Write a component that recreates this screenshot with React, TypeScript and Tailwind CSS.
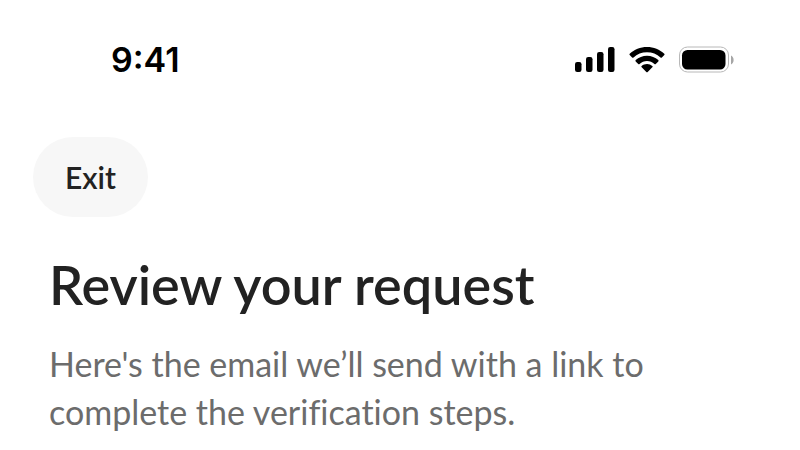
function StatusIcons() {
  return (
    <div className="flex items-center" aria-hidden="true">
      <svg className="h-7 w-10" viewBox="0 0 40 28" fill="#000">
        <rect x="0" y="16" width="6.500" height="10" rx="2.200" />
        <rect x="11" y="11" width="6.500" height="15" rx="2.200" />
        <rect x="22" y="6" width="6.500" height="20" rx="2.200" />
        <rect x="33" y="1" width="6.500" height="25" rx="2.200" />
      </svg>
      <svg className="ml-3.5 h-7 w-9" viewBox="0 0 36 28" fill="#000">
        <path d="M18 1C11.300 1 5.200 3.500.7 7.700c-.4.4-.4 1 0 1.400l2.400 2.400c.4.4 1 .4 1.400 0C8.100 8.200 12.800 6.300 18 6.300s9.900 1.900 13.500 5.200c.4.4 1 .4 1.400 0l2.400-2.400c.4-.4.4-1 0-1.400C30.800 3.500 24.700 1 18 1Z" />
        <path d="M18 9.700c-4.300 0-8.300 1.600-11.300 4.300-.4.4-.4 1 0 1.400l2.500 2.500c.4.400 1 .4 1.400.1 2-1.800 4.600-2.900 7.400-2.900s5.400 1.100 7.400 2.900c.4.300 1 .3 1.400-.1l2.500-2.500c.4-.4.4-1 0-1.400-3-2.700-7-4.300-11.300-4.300Z" />
        <path d="M18 18c-2 0-3.900.7-5.300 1.900-.5.400-.5 1 0 1.400l4.600 4.600c.4.4 1 .4 1.400 0l4.600-4.600c.5-.4.5-1 0-1.400A8 8 0 0 0 18 18Z" />
      </svg>
      <svg className="ml-3.5 h-7 w-14" viewBox="0 0 56 28">
        <rect x="0.500" y="1" width="49" height="25" rx="8" fill="none" stroke="#b8b8b8" />
        <rect x="3" y="4" width="43.500" height="19.500" rx="5.500" fill="#000" />
        <path d="M52 9.500v9c1.600-.7 2.600-2.400 2.600-4.500S53.600 10.200 52 9.500Z" fill="#a6a6a6" />
      </svg>
    </div>
  );
}

export default function App() {
  return (
    <div className="min-h-screen bg-white px-[33px] font-['Lato',sans-serif] text-[#222222]">
      <header className="flex items-center justify-between pt-9 pr-8 pl-[78px]">
        <time className="font-['Inter',sans-serif] text-[34px] leading-12 font-semibold text-black">
          9:41
        </time>
        <StatusIcons />
      </header>

      <main className="pt-[53px]">
        <button
          type="button"
          className="h-20 rounded-full bg-[#f7f7f7] px-8 text-[30px] leading-9 font-semibold"
        >
          Exit
        </button>

        <div className="px-4 pt-9">
          <h1 className="text-[54px] leading-16 font-semibold">Review your request</h1>
          <p className="max-w-[620px] pt-[23px] text-[34px] leading-12 text-[#6c6c6c] [font-variant-ligatures:none]">
            Here's the email we’ll send with a link to complete the verification steps.
          </p>
        </div>
      </main>
    </div>
  );
}
